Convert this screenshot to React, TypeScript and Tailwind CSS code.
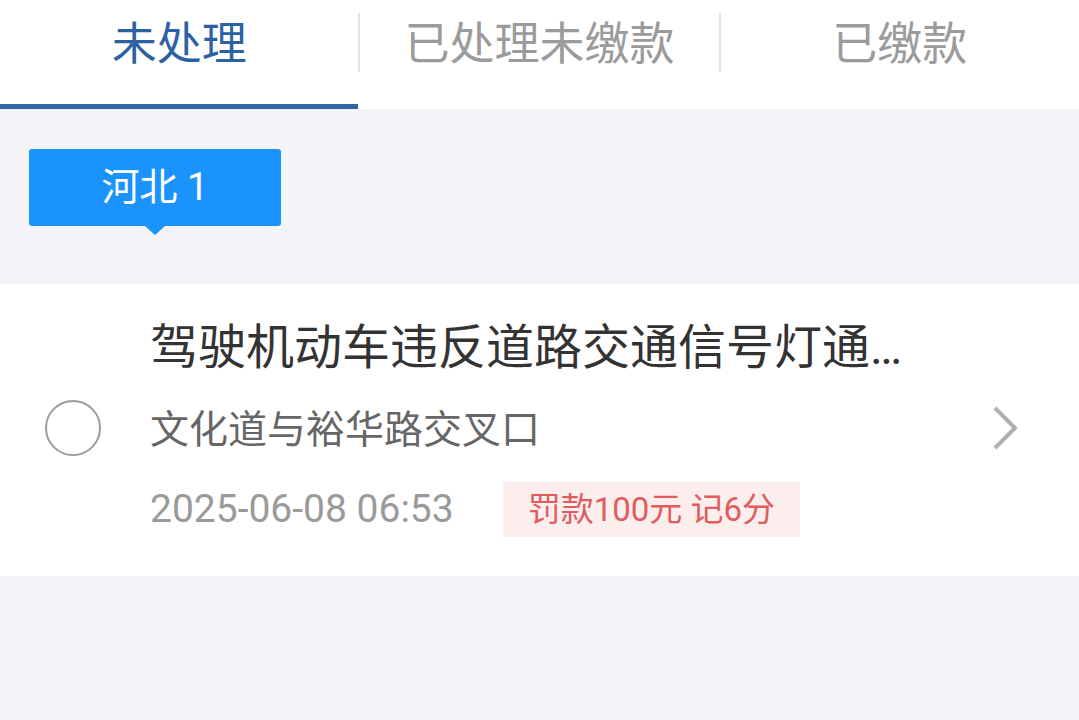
import React, { useState } from "react";

const TABS = ["未处理", "已处理未缴款", "已缴款"];

const FONT = { fontFamily: '"Roboto", "Noto Sans CJK SC", sans-serif' };

export default function App() {
  const [active, setActive] = useState(0);

  return (
    <div
      className="flex min-h-screen w-full flex-col bg-[#f4f4f8]"
      style={FONT}
    >
      {/* tabs */}
      <div className="flex h-[109px] bg-white">
        {TABS.map((t, i) => (
          <React.Fragment key={t}>
            {i > 0 && (
              <div className="mt-[13px] h-[59px] w-[2px] shrink-0 bg-[#e2e2e2]" />
            )}
            <button
              onClick={() => setActive(i)}
              className="flex flex-1 flex-col"
            >
              <div
                className={`flex h-[104px] w-full items-center justify-center pb-[14px] text-[45px] ${
                  i === active ? "text-[#2c62a3]" : "text-[#9b9b9b]"
                }`}
              >
                {t}
              </div>
              <div
                className={`h-[5px] w-full ${
                  i === active ? "bg-[#2e65a5]" : "bg-transparent"
                }`}
              />
            </button>
          </React.Fragment>
        ))}
      </div>

      {/* region tag */}
      <div className="flex h-[175px] items-start px-[29px] pt-[40px]">
        <div className="relative flex h-[77px] w-[252px] items-center justify-center rounded-[3px] bg-[#1a93fc] text-[38px] text-white">
          河北 1
          <div className="absolute -bottom-[9px] left-1/2 h-0 w-0 -translate-x-1/2 border-x-[10px] border-t-[9px] border-x-transparent border-t-[#1a93fc]" />
        </div>
      </div>

      {/* violation card */}
      <div className="flex items-center bg-white pt-[34px] pb-[39px] pl-[45px]">
        <div className="h-[56px] w-[56px] shrink-0 rounded-full border-[2.5px] border-[#9c9c9c]" />
        <div className="ml-[49px] flex min-w-0 flex-1 flex-col">
          <div
            title="驾驶机动车违反道路交通信号灯通行的"
            className="max-w-[790px] truncate text-[48px] leading-[60px] text-[#333333]"
          >
            驾驶机动车违反道路交通信号灯通行的
          </div>
          <div className="mt-[26px] text-[39px] leading-[52px] text-[#666666]">
            文化道与裕华路交叉口
          </div>
          <div className="mt-[26px] flex h-[55px] items-center gap-[49px]">
            <span className="text-[39px] leading-none text-[#9a9a9a]">
              2025-06-08 06:53
            </span>
            <span className="flex h-[55px] items-center bg-[#fdeeee] px-[25px] text-[33px] leading-none text-[#e05c5e]">
              罚款100元 记6分
            </span>
          </div>
        </div>
        <svg
          width="30"
          height="48"
          viewBox="0 0 30 48"
          className="mr-[58px] shrink-0"
        >
          <polyline
            points="4,4 24,24 4,44"
            fill="none"
            stroke="#b0b0b0"
            strokeWidth="4"
          />
        </svg>
      </div>
    </div>
  );
}
